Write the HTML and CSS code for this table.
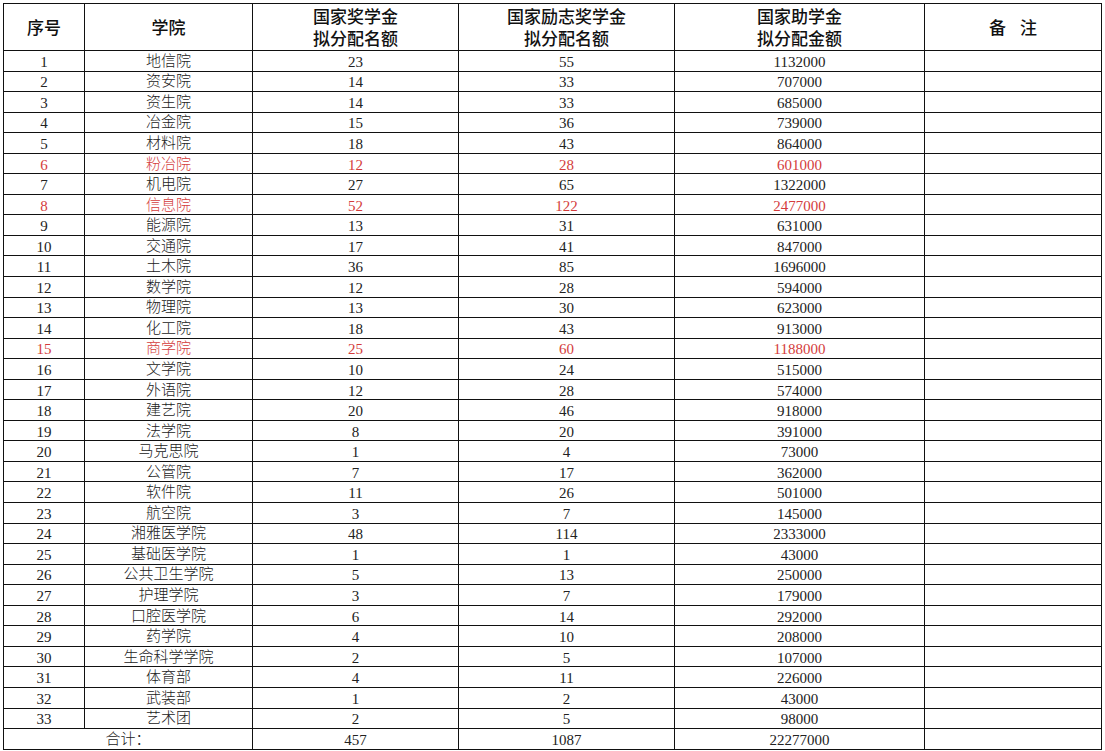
FILE: index.html
```html
<!DOCTYPE html>
<html lang="zh-CN">
<head>
<meta charset="utf-8">
<title>国家奖助学金分配</title>
<link rel="stylesheet" href="styles.css">
</head>
<body>
<table class="sheet">
  <colgroup>
    <col class="c-no"><col class="c-college"><col class="c-a"><col class="c-b"><col class="c-c"><col class="c-note">
  </colgroup>
  <thead>
    <tr class="head">
      <th>序号</th>
      <th>学院</th>
      <th>国家奖学金<br>拟分配名额</th>
      <th>国家励志奖学金<br>拟分配名额</th>
      <th>国家助学金<br>拟分配金额</th>
      <th class="note-head"><span class="gap">备</span>注</th>
    </tr>
  </thead>
  <tbody>
    <tr><td>1</td><td class="cn">地信院</td><td>23</td><td>55</td><td>1132000</td><td></td></tr>
    <tr><td>2</td><td class="cn">资安院</td><td>14</td><td>33</td><td>707000</td><td></td></tr>
    <tr><td>3</td><td class="cn">资生院</td><td>14</td><td>33</td><td>685000</td><td></td></tr>
    <tr><td>4</td><td class="cn">冶金院</td><td>15</td><td>36</td><td>739000</td><td></td></tr>
    <tr><td>5</td><td class="cn">材料院</td><td>18</td><td>43</td><td>864000</td><td></td></tr>
    <tr class="red"><td>6</td><td class="cn">粉冶院</td><td>12</td><td>28</td><td>601000</td><td></td></tr>
    <tr><td>7</td><td class="cn">机电院</td><td>27</td><td>65</td><td>1322000</td><td></td></tr>
    <tr class="red"><td>8</td><td class="cn">信息院</td><td>52</td><td>122</td><td>2477000</td><td></td></tr>
    <tr><td>9</td><td class="cn">能源院</td><td>13</td><td>31</td><td>631000</td><td></td></tr>
    <tr><td>10</td><td class="cn">交通院</td><td>17</td><td>41</td><td>847000</td><td></td></tr>
    <tr><td>11</td><td class="cn">土木院</td><td>36</td><td>85</td><td>1696000</td><td></td></tr>
    <tr><td>12</td><td class="cn">数学院</td><td>12</td><td>28</td><td>594000</td><td></td></tr>
    <tr><td>13</td><td class="cn">物理院</td><td>13</td><td>30</td><td>623000</td><td></td></tr>
    <tr><td>14</td><td class="cn">化工院</td><td>18</td><td>43</td><td>913000</td><td></td></tr>
    <tr class="red"><td>15</td><td class="cn">商学院</td><td>25</td><td>60</td><td>1188000</td><td></td></tr>
    <tr><td>16</td><td class="cn">文学院</td><td>10</td><td>24</td><td>515000</td><td></td></tr>
    <tr><td>17</td><td class="cn">外语院</td><td>12</td><td>28</td><td>574000</td><td></td></tr>
    <tr><td>18</td><td class="cn">建艺院</td><td>20</td><td>46</td><td>918000</td><td></td></tr>
    <tr><td>19</td><td class="cn">法学院</td><td>8</td><td>20</td><td>391000</td><td></td></tr>
    <tr><td>20</td><td class="cn">马克思院</td><td>1</td><td>4</td><td>73000</td><td></td></tr>
    <tr><td>21</td><td class="cn">公管院</td><td>7</td><td>17</td><td>362000</td><td></td></tr>
    <tr><td>22</td><td class="cn">软件院</td><td>11</td><td>26</td><td>501000</td><td></td></tr>
    <tr><td>23</td><td class="cn">航空院</td><td>3</td><td>7</td><td>145000</td><td></td></tr>
    <tr><td>24</td><td class="cn">湘雅医学院</td><td>48</td><td>114</td><td>2333000</td><td></td></tr>
    <tr><td>25</td><td class="cn">基础医学院</td><td>1</td><td>1</td><td>43000</td><td></td></tr>
    <tr><td>26</td><td class="cn">公共卫生学院</td><td>5</td><td>13</td><td>250000</td><td></td></tr>
    <tr><td>27</td><td class="cn">护理学院</td><td>3</td><td>7</td><td>179000</td><td></td></tr>
    <tr><td>28</td><td class="cn">口腔医学院</td><td>6</td><td>14</td><td>292000</td><td></td></tr>
    <tr><td>29</td><td class="cn">药学院</td><td>4</td><td>10</td><td>208000</td><td></td></tr>
    <tr><td>30</td><td class="cn">生命科学学院</td><td>2</td><td>5</td><td>107000</td><td></td></tr>
    <tr><td>31</td><td class="cn">体育部</td><td>4</td><td>11</td><td>226000</td><td></td></tr>
    <tr><td>32</td><td class="cn">武装部</td><td>1</td><td>2</td><td>43000</td><td></td></tr>
    <tr><td>33</td><td class="cn">艺术团</td><td>2</td><td>5</td><td>98000</td><td></td></tr>
    <tr class="total"><td colspan="2" class="cn">合计：</td><td>457</td><td>1087</td><td>22277000</td><td></td></tr>
  </tbody>
</table>
</body>
</html>
```

FILE: styles.css
```css
html, body {
  margin: 0;
  padding: 0;
  background: #ffffff;
}

body {
  padding: 3px 0 0 3px;
}

.sheet {
  border-collapse: collapse;
  table-layout: fixed;
  width: 1098px;
  font-family: "Liberation Serif", "Noto Sans CJK SC", serif;
  font-size: 15px;
  color: #222;
}

.c-no { width: 81px; }
.c-college { width: 168px; }
.c-a { width: 206px; }
.c-b { width: 216px; }
.c-c { width: 250px; }
.c-note { width: 177px; }

.sheet th,
.sheet td {
  border: 1px solid #111;
  text-align: center;
  vertical-align: middle;
  padding: 0;
}

.head th {
  height: 46px;
  font-family: "Noto Sans CJK SC", sans-serif;
  font-weight: 500;
  font-size: 17px;
  line-height: 22px;
  color: #111;
}

.gap {
  margin-right: 14px;
}

.sheet tbody tr {
  height: 20.56px;
}

.sheet tbody td {
  line-height: 16px;
  padding-top: 2px;
}

.sheet tbody td.cn {
  font-family: "Noto Sans CJK SC", sans-serif;
  font-weight: 300;
  font-size: 15px;
  line-height: 15px;
  padding-top: 0;
  padding-bottom: 3px;
}

.red td {
  color: #d43c3c;
}
```
